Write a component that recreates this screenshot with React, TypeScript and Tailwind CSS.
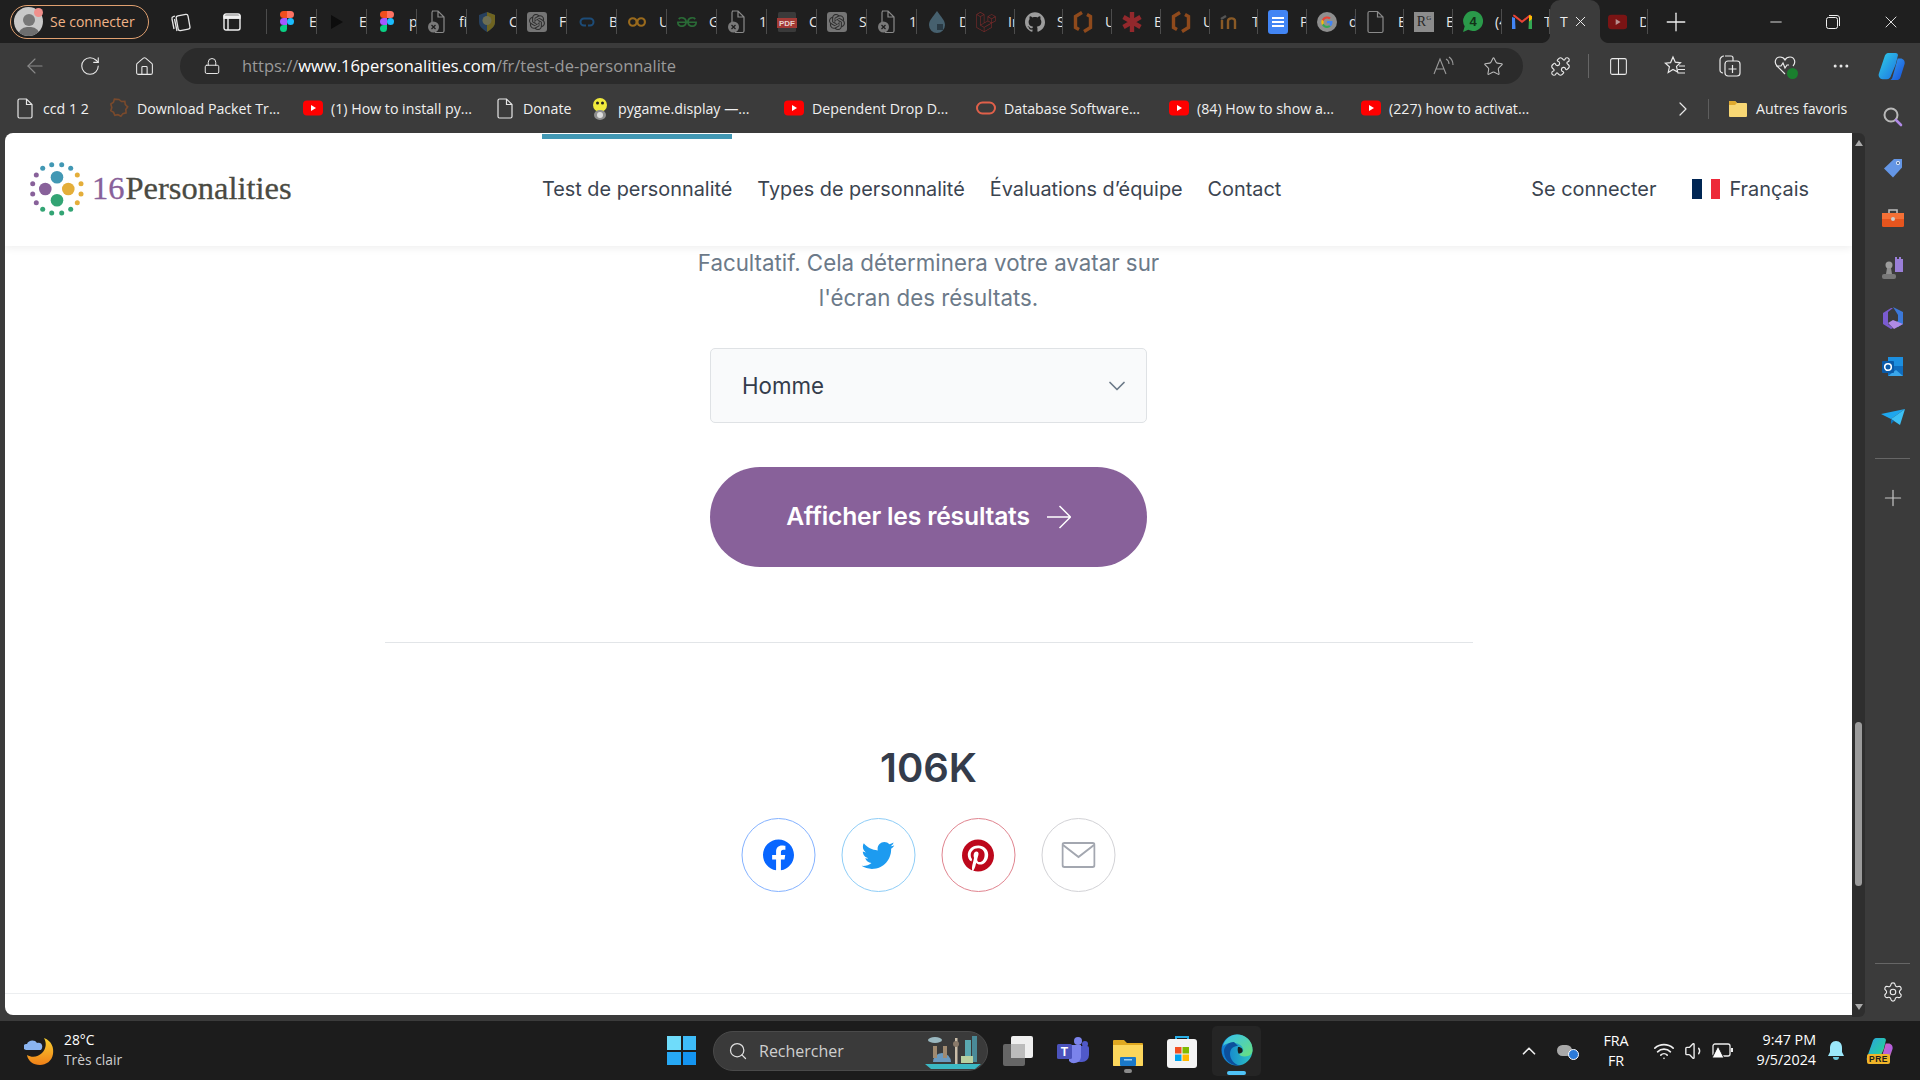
import React from "react";
import { ArrowLeft, RotateCw, Home, Lock, Star, Puzzle, Columns2, Minus, X, Plus, ChevronRight, ChevronUp, ChevronDown, Search, Settings, Wifi, Volume1, Ellipsis } from "lucide-react";
import { SiOpenai, SiGeeksforgeeks, SiLaravel, SiGithub } from "react-icons/si";
import { FaFacebook, FaTwitter, FaPinterest } from "react-icons/fa";

const Figma = () => (
  <svg width="14" height="21" viewBox="0 0 38 57">
    <path d="M19 0H9.5a9.5 9.5 0 0 0 0 19H19z" fill="#f24e1e" />
    <path d="M19 0h9.5a9.5 9.5 0 0 1 0 19H19z" fill="#ff7262" />
    <path d="M19 19H9.5a9.5 9.5 0 0 0 0 19H19z" fill="#a259ff" />
    <circle cx="28.5" cy="28.5" r="9.5" fill="#1abcfe" />
    <path d="M9.5 38H19v9.5a9.5 9.5 0 1 1-9.5-9.5z" fill="#0acf83" />
  </svg>
);
const FileX = () => (
  <svg width="20" height="25" viewBox="0 0 20 25" fill="none">
    <path d="M5 2h6l6 6v14a1.5 1.5 0 0 1-1.5 1.5H8M5 14V3.5A1.5 1.5 0 0 1 6.5 2M11 2v6h6" stroke="#8a8a8a" strokeWidth="1.2" />
    <circle cx="6.5" cy="18" r="5.5" fill="#7a7a7a" />
    <path d="M4.5 16l4 4M8.5 16l-4 4" stroke="#1f1f1f" strokeWidth="1.3" />
  </svg>
);
const Openai = () => (
  <div className="w-[20px] h-[20px] rounded-[3px] bg-[#757575] flex items-center justify-center">
    <SiOpenai size={16} color="#2e2e2e" />
  </div>
);
const Brackets = () => (
  <svg width="20" height="24" viewBox="0 0 20 24" fill="none" stroke="#8f4a1c" strokeWidth="3.4">
    <path d="M9 2.500L2.500 6.500v11L6 19.500" />
    <path d="M11 21.500l6.500-4v-11L14 4.500" />
  </svg>
);
const Tabs = [
  { w: "w-[50px]", icon: <Figma />, label: "Exercices" },
  { w: "w-[50px]", icon: <svg width="16" height="18" viewBox="0 0 16 18"><path d="M2 2l12 7-12 7z" fill="#0d0d0d" /></svg>, label: "Exemple" },
  { w: "w-[50px]", icon: <Figma />, label: "projet" },
  { w: "w-[50px]", icon: <FileX />, label: "fichier" },
  { w: "w-[50px]", icon: <svg width="18" height="22" viewBox="0 0 18 22"><path d="M9 1l8 3v7c0 5-4 7-8 10-4-3-8-5-8-10V4z" fill="#27405e" /><path d="M9 1l8 3v7c0 5-4 7-8 10z" fill="#6f6420" /><circle cx="9" cy="9.500" r="4.500" fill="#6e6e52" /></svg>, label: "Cours" },
  { w: "w-[50px]", icon: <Openai />, label: "Fonction" },
  { w: "w-[50px]", icon: <svg width="18" height="12" viewBox="0 0 18 12" fill="none"><path d="M6 2.500h6a3.500 3.500 0 0 1 0 7h-2M8 9.500H6a3.500 3.500 0 0 1 0-7" stroke="#1d4c78" strokeWidth="2" /></svg>, label: "Base" },
  { w: "w-[50px]", icon: <svg width="24" height="14" viewBox="0 0 24 14" fill="none" stroke="#9a6a1c" strokeWidth="2.6"><circle cx="7" cy="7" r="4.5" /><circle cx="17" cy="7" r="4.5" /></svg>, label: "Udemy" },
  { w: "w-[50px]", icon: <SiGeeksforgeeks size={20} color="#2a6a36" />, label: "Geeks" },
  { w: "w-[50px]", icon: <FileX />, label: "1" },
  { w: "w-[50px]", icon: <svg width="20" height="24" viewBox="0 0 20 24"><rect x="1" y="2" width="18" height="20" rx="1.5" fill="#3a3a3a" /><rect x="0" y="8" width="20" height="10" fill="#a33a36" /><text x="10" y="16" fontSize="8" fontWeight="700" textAnchor="middle" fill="#e6d2d0" fontFamily="Liberation Sans, sans-serif">PDF</text></svg>, label: "Cours" },
  { w: "w-[50px]", icon: <Openai />, label: "Sujet" },
  { w: "w-[50px]", icon: <FileX />, label: "1" },
  { w: "w-[49px]", icon: <svg width="18" height="24" viewBox="0 0 18 24"><path d="M9 1c4 6 8 9 8 14a8 8 0 0 1-16 0C1 10 5 7 9 1z" fill="#46606e" /><rect x="9" y="14" width="6" height="6" fill="#2a3a44" /></svg>, label: "Docs" },
  { w: "w-[49px]", icon: <SiLaravel size={20} color="#7a2a2a" />, label: "Installation" },
  { w: "w-[48px]", icon: <SiGithub size={20} color="#9c9c9c" />, label: "Sujet" },
  { w: "w-[49px]", icon: <Brackets />, label: "Udemy" },
  { w: "w-[49px]", icon: <svg width="20" height="20" viewBox="0 0 20 20" stroke="#93282c" strokeWidth="4.4"><path d="M10 0v20M1.5 5l17 10M1.5 15l17-10" /></svg>, label: "Blog" },
  { w: "w-[49px]", icon: <Brackets />, label: "Udemy" },
  { w: "w-[48px]", icon: <svg width="20" height="14" viewBox="0 0 20 14" fill="none" stroke="#8a5a26" strokeWidth="2.4"><path d="M2 14V5M8 14V6c0-3 7-4 7 0v8" /><path d="M1 4l5-3" stroke="#555" /></svg>, label: "Tuto" },
  { w: "w-[49px]", icon: <div className="w-[20px] h-[24px] rounded-[3px] bg-[#4285f4] flex flex-col items-center justify-center gap-[2px]"><div className="w-[12px] h-[2px] bg-white" /><div className="w-[12px] h-[2px] bg-white" /><div className="w-[12px] h-[2px] bg-white" /></div>, label: "Projet" },
  { w: "w-[49px]", icon: <svg width="20" height="20" viewBox="0 0 20 20"><circle cx="10" cy="10" r="10" fill="#8f8f8f" /><path d="M15.5 10.2c0-.4 0-.8-.1-1.2H10v2.2h3.1a2.700 2.700 0 0 1-1.100 1.700l1.800 1.400c1-1 1.700-2.400 1.700-4.100z" fill="#4285f4" /><path d="M10 16c1.500 0 2.800-.5 3.800-1.400L12 13.200c-.5.300-1.200.6-2 .6-1.500 0-2.800-1-3.300-2.400L4.900 12.800C5.800 14.700 7.700 16 10 16z" fill="#34a853" /><path d="M6.700 11.400a3.700 3.700 0 0 1 0-2.400L4.900 7.500a6 6 0 0 0 0 5.400z" fill="#fbbc05" /><path d="M10 6.400c.8 0 1.600.3 2.200.9l1.600-1.600A6 6 0 0 0 4.900 7.500L6.700 9c.5-1.500 1.800-2.600 3.300-2.600z" fill="#ea4335" /></svg>, label: "doc" },
  { w: "w-[48px]", icon: <svg width="18" height="24" viewBox="0 0 18 24" fill="none" stroke="#8a8a8a" strokeWidth="1.2"><path d="M2.500 1.500h8l5.500 5.500v14a1.500 1.500 0 0 1-1.500 1.500h-12a1.500 1.500 0 0 1-1.500-1.500V3a1.500 1.500 0 0 1 1.500-1.500zM10.500 1.500V7H16" /></svg>, label: "Examen" },
  { w: "w-[49px]", icon: <div className="w-[20px] h-[20px] bg-[#8c8c8c] flex items-center justify-center text-[#262626] text-[14px] leading-none font-['Liberation_Serif',serif]">R<sup className="text-[7px]">G</sup></div>, label: "Etude" },
  { w: "w-[49px]", icon: <div className="relative w-[20px] h-[21px] flex items-center justify-center"><svg width="20" height="21" viewBox="0 0 20 21"><path d="M10 0a10 10 0 1 1-4.700 18.800L0 21l1.700-5.700A10 10 0 0 1 10 0z" fill="#2a9a4a" /></svg><span className="absolute inset-0 flex items-center justify-center text-[13px] font-bold text-[#123018] font-['Liberation_Sans',sans-serif]">4</span></div>, label: "(4) WhatsApp" },
  { w: "w-[48px]", icon: <svg width="20" height="16" viewBox="0 0 20 16"><path d="M0 15V3l3 1 .5 11z" fill="#4285f4" /><path d="M20 15V3l-3 1-.5 11z" fill="#34a853" /><path d="M1 2l9 7 9-7-.5-1.500L17 1l-7 5.500L3 1 1.500.5z" fill="#ea4335" /><path d="M17 1l3 1v3l-3 2.500z" fill="#fbbc05" /></svg>, label: "Test" },
];

const Tab = ({ t }: { t: (typeof Tabs)[number] }) => (
  <div className={`${t.w} h-full flex items-center pl-[10px] relative`}>
    <div className="w-[20px] flex items-center justify-center shrink-0">{t.icon}</div>
    <div className="ml-[12px] flex-1 overflow-hidden whitespace-nowrap text-[14px] text-[#e8e8e8]">{t.label}</div>
    <div className="w-[1px] h-[25px] bg-[#4c4c4c] shrink-0" />
  </div>
);

const Yt = () => (
  <svg width="20" height="16" viewBox="0 0 20 16"><rect y="0.500" width="20" height="15" rx="4" fill="#f00" /><path d="M8 5l5 3-5 3z" fill="#fff" /></svg>
);
const Doc = () => (
  <svg width="16" height="21" viewBox="0 0 16 21" fill="none" stroke="#e6e6e6" strokeWidth="1.2"><path d="M2.500 1h7L15 6.500v12a1.500 1.500 0 0 1-1.500 1.500h-11A1.500 1.500 0 0 1 1 18.500V2.500A1.500 1.500 0 0 1 2.500 1zM9.500 1v5.500H15" /></svg>
);
const Bookmarks = [
  { w: "w-[94px]", icon: <Doc />, label: "ccd 1 2" },
  { w: "w-[194px]", icon: <svg width="20" height="20" viewBox="0 0 20 20" fill="none" stroke="#7a4a2c" strokeWidth="1.600"><path d="M10 1.500l2.500 2 3.300-.2.500 3.200 2.400 2.300-1.900 2.700.3 3.300-3.200.8-2 2.600-2.900-1.500-3.200.7-1.200-3-2.800-1.700 1-3.100L1.800 6l2.700-1.800.9-3.100z" /></svg>, label: "Download Packet Tr..." },
  { w: "w-[192px]", icon: <Yt />, label: "(1) How to install py..." },
  { w: "w-[95px]", icon: <Doc />, label: "Donate" },
  { w: "w-[194px]", icon: <svg width="20" height="24" viewBox="0 0 20 24"><ellipse cx="10" cy="8" rx="7" ry="7" fill="#f0ea3c" /><circle cx="7.500" cy="6" r="1.500" fill="#222" /><circle cx="12.500" cy="6" r="1.500" fill="#222" /><ellipse cx="10" cy="18" rx="6" ry="5" fill="#8f8f8f" /><ellipse cx="10" cy="18" rx="3" ry="3" fill="#ddd" /></svg>, label: "pygame.display —..." },
  { w: "w-[192px]", icon: <Yt />, label: "Dependent Drop D..." },
  { w: "w-[193px]", icon: <svg width="20" height="14" viewBox="0 0 20 14" fill="none"><rect x="1" y="1.500" width="18" height="11" rx="5.500" stroke="#e0604a" strokeWidth="2" /></svg>, label: "Database Software..." },
  { w: "w-[192px]", icon: <Yt />, label: "(84) How to show a..." },
  { w: "w-[300px]", icon: <Yt />, label: "(227) how to activat..." },
];

const Bookmark = ({ b }: { b: (typeof Bookmarks)[number] }) => (
  <div className={`${b.w} flex items-center shrink-0`}>
    <div className="w-[20px] flex items-center justify-center shrink-0">{b.icon}</div>
    <span className="ml-[8px] whitespace-nowrap text-[14.200px] text-[#f0f0f0]">{b.label}</span>
  </div>
);

const Copilot = ({ size = 34 }: { size?: number }) => (
  <svg width={size} height={size} viewBox="0 0 32 32">
    <defs>
      <linearGradient id="cp1" x1="0" y1="0" x2="1" y2="1"><stop offset="0" stopColor="#2fd0e8" /><stop offset="1" stopColor="#1d6fe0" /></linearGradient>
      <linearGradient id="cp2" x1="0" y1="0" x2="1" y2="1"><stop offset="0" stopColor="#3aa0f0" /><stop offset="1" stopColor="#1350d8" /></linearGradient>
    </defs>
    <path d="M12 2h8c1.500 0 2 1 2.400 2.200L20 14l-5 12c-.5 2-2 4-4.500 4H6C3 30 1 27 2 24L8 6c.5-2 2-4 4-4z" fill="url(#cp1)" />
    <path d="M22 8h3c3 0 5 2.500 4.500 5.500L25 28c-.5 2-2 3-4 3h-8c2 0 3-1 3.500-3L21 12z" fill="url(#cp2)" />
  </svg>
);
const CopilotPre = () => (
  <svg width="30" height="28" viewBox="0 0 32 30">
    <defs>
      <linearGradient id="cq1" x1="0" y1="0" x2="1" y2="1"><stop offset="0" stopColor="#2b9fe8" /><stop offset="0.600" stopColor="#27c7a8" /><stop offset="1" stopColor="#d8d030" /></linearGradient>
      <linearGradient id="cq2" x1="0" y1="0" x2="1" y2="1"><stop offset="0" stopColor="#e860b0" /><stop offset="0.600" stopColor="#b060e0" /><stop offset="1" stopColor="#f09040" /></linearGradient>
    </defs>
    <path d="M12 1h8c1.500 0 2 1 2.400 2.200L20 13l-5 11c-.5 2-2 4-4.500 4H6c-3 0-5-3-4-6L8 5c.5-2 2-4 4-4z" fill="url(#cq1)" />
    <path d="M22 7h3c3 0 5 2.500 4.500 5.500L25 26c-.5 2-2 3-4 3h-8c2 0 3-1 3.500-3L21 11z" fill="url(#cq2)" />
  </svg>
);

const Sidebar = () => (
  <div className="w-[55px] flex flex-col items-center shrink-0">
    <svg className="mt-[25px]" width="20" height="20" viewBox="0 0 20 20"><path d="M1 10.500L11 1h8v8.500L10 19.500z" fill="#6496e6" /><circle cx="15" cy="5" r="2" fill="#e8eef8" /><circle cx="15" cy="5" r="1" fill="#34507c" /></svg>
    <svg className="mt-[29px]" width="24" height="22" viewBox="0 0 24 22"><path d="M8 6V3h8v3" stroke="#bdbdbd" fill="none" strokeWidth="1.600" /><rect x="1" y="6" width="22" height="14" rx="1.500" fill="#e6551e" /><rect x="1" y="6" width="22" height="6" fill="#f47036" /><circle cx="12" cy="12" r="2" fill="#ccc" /></svg>
    <svg className="mt-[27px]" width="24" height="24" viewBox="0 0 24 24"><path d="M14 1h2v2h2V1h2v2h2V1v15h-8z" fill="#9a7fd8" /><circle cx="8" cy="9" r="3.500" fill="#9c9c9c" /><path d="M6 12h4l1 6H5z" fill="#8f8f8f" /><rect x="1" y="18" width="14" height="5" rx="2" fill="#777" /></svg>
    <svg className="mt-[26px]" width="22" height="24" viewBox="0 0 22 24"><path d="M11 1l10 5v12l-5 3-5-3 5-3V9z" fill="#3b78d8" /><path d="M1 7l8-5 2 0-5 4v12l5 4-2 1-8-5z" fill="#7a5bd0" /><path d="M6 17l5-3 10 4-9 5z" fill="#b08ae6" /></svg>
    <svg className="mt-[26px]" width="22" height="22" viewBox="0 0 22 22"><rect x="6" y="1" width="15" height="9" fill="#1c8fe0" /><rect x="6" y="10" width="15" height="10" fill="#0f6cbd" /><path d="M6 20h15l-7-6z" fill="#3aa6ea" /><rect x="0" y="5" width="12" height="12" rx="1" fill="#0a5aa8" /><circle cx="6" cy="11" r="3.300" fill="none" stroke="#fff" strokeWidth="1.600" /></svg>
    <svg className="mt-[31px]" width="24" height="16" viewBox="0 0 24 16"><path d="M0 5l24-5-14 10z" fill="#1ea7ee" /><path d="M24 0l-5 16-9-6z" fill="#3cc0f5" /><path d="M10 10v5l3-3z" fill="#0c6fb8" /></svg>
    <div className="mt-[33px] w-[35px] h-[1px] bg-[#666]" />
    <Plus className="mt-[26px]" size={26} strokeWidth={1.100} color="#c8c8c8" />
    <div className="mt-auto w-[35px] h-[1px] bg-[#666]" />
    <Settings className="mt-[17px] mb-[18px]" size={22} strokeWidth={1.250} color="#ededed" />
  </div>
);

const Scrollbar = () => (
  <div className="w-[13px] h-[884px] shrink-0 bg-[#2e2e2e] rounded-r-[6px] flex flex-col items-center">
    <svg className="mt-[7px]" width="8" height="6" viewBox="0 0 8 6"><path d="M4 0l4 6H0z" fill="#aaa" /></svg>
    <div className="w-[7px] h-[164px] mt-[576px] bg-[#9b9b9b] rounded-full" />
    <svg className="mt-[118px]" width="8" height="6" viewBox="0 0 8 6"><path d="M0 0h8L4 6z" fill="#aaa" /></svg>
  </div>
);

const Logo = () => (
  <svg width="60" height="60" viewBox="0 0 60 60">
    <circle cx="32" cy="17.300" r="6.300" fill="#4298b4" />
    <circle cx="20.300" cy="29" r="6.300" fill="#88619a" />
    <circle cx="43.300" cy="29" r="6.300" fill="#e4ae3a" />
    <circle cx="32" cy="40.300" r="6.300" fill="#33a474" />
    {[[26.700, 4.700], [36.700, 4.700], [17.700, 8.300], [45.700, 8.300]].map(([x, y], i) => <circle key={i} cx={x} cy={y} r="2.500" fill="#4298b4" />)}
    {[[52.300, 15], [56, 23.700], [56, 34], [52.300, 42.700]].map(([x, y], i) => <circle key={i} cx={x} cy={y} r="2.500" fill="#e4ae3a" />)}
    {[[45.700, 49.300], [36.700, 53], [26.700, 53], [17.700, 49.300]].map(([x, y], i) => <circle key={i} cx={x} cy={y} r="2.500" fill="#33a474" />)}
    {[[11.300, 42.700], [7.700, 34], [7.700, 23.700], [11.300, 15]].map(([x, y], i) => <circle key={i} cx={x} cy={y} r="2.500" fill="#88619a" />)}
  </svg>
);

export default function App() {
  return (
    <div className="w-[1920px] h-[1080px] overflow-hidden flex flex-col bg-[#3b3b3b] font-['Open_Sans',sans-serif]">
      {/* Tab strip */}
      <div className="h-[43px] bg-[#1f1f1f] flex items-center shrink-0">
        <div className="w-[139px] h-[34px] ml-[10px] rounded-full border border-[#e0a070] flex items-center pl-[3px] relative shrink-0">
          <div className="w-[29px] h-[29px] rounded-full bg-[#c9c9c9] flex flex-col items-center justify-end overflow-hidden">
            <div className="w-[12px] h-[12px] rounded-full bg-[#777] mb-[1px]" />
            <div className="w-[22px] h-[9px] rounded-t-full bg-[#6e6e6e]" />
          </div>
          <div className="absolute left-[23px] top-[2px] w-[9px] h-[9px] rounded-full bg-[#f0908c]" />
          <span className="ml-[7px] text-[14px] text-[#f0b488] whitespace-nowrap">Se connecter</span>
        </div>
        <div className="w-[62px] flex items-center justify-center shrink-0">
          <svg width="22" height="22" viewBox="0 0 22 22" fill="none" stroke="#e6e6e6" strokeWidth="1.300"><rect x="8" y="4" width="12" height="15" rx="2" transform="rotate(-10 14 11)" /><path d="M5 18L3 8c-.2-1 .3-2 1.300-2.300L6 5M8 20L5.500 8" /></svg>
        </div>
        <div className="w-[42px] flex items-center justify-center shrink-0">
          <svg width="18" height="18" viewBox="0 0 18 18" fill="none" stroke="#f0f0f0" strokeWidth="1.400"><rect x="1" y="1" width="16" height="16" rx="2" /><path d="M1 5h16M5 5v12" /><path d="M1 3h16v2H1z" fill="#f0f0f0" /></svg>
        </div>
        <div className="w-[1px] h-[25px] bg-[#4c4c4c] ml-[13px] shrink-0" />
        {Tabs.map((t, i) => <Tab key={i} t={t} />)}
        <div className="w-[50px] h-full bg-[#3b3b3b] rounded-t-[10px] flex items-center pl-[10px] relative shrink-0">
          <span className="text-[14px] text-[#eee] w-[12px]">T</span>
          <X size={17} strokeWidth={1.400} color="#eee" />
          <svg className="absolute left-[-8px] bottom-0" width="8" height="8" viewBox="0 0 8 8"><path d="M8 0v8H0c4 0 8-4 8-8z" fill="#3b3b3b" /></svg>
          <svg className="absolute right-[-8px] bottom-0" width="8" height="8" viewBox="0 0 8 8"><path d="M0 0v8h8C4 8 0 4 0 0z" fill="#3b3b3b" /></svg>
        </div>
        <div className="w-[48px] h-full flex items-center pl-[8px] shrink-0">
          <svg width="20" height="16" viewBox="0 0 20 16"><rect y="0.500" width="20" height="15" rx="3.500" fill="#7a1414" /><path d="M8 5l5 3-5 3z" fill="#b8908f" /></svg>
          <span className="ml-[12px] w-[7px] overflow-hidden text-[14px] text-[#e8e8e8]">Docs</span>
          <div className="ml-[1px] w-[1px] h-[25px] bg-[#4c4c4c]" />
        </div>
        <div className="w-[56px] flex items-center justify-center shrink-0">
          <Plus size={30} strokeWidth={1.050} color="#eee" />
        </div>
        <div className="flex-1" />
        <div className="w-[57px] flex justify-center shrink-0"><Minus size={18} strokeWidth={1.200} color="#eee" /></div>
        <div className="w-[58px] flex justify-center shrink-0">
          <svg width="14" height="14" viewBox="0 0 14 14" fill="none" stroke="#eee" strokeWidth="1"><rect x="0.500" y="2.500" width="11" height="11" rx="2" /><path d="M3 .5h8a2.500 2.500 0 0 1 2.500 2.500v8" /></svg>
        </div>
        <div className="w-[58px] flex justify-center shrink-0"><X size={20} strokeWidth={1.100} color="#eee" /></div>
      </div>

      {/* Toolbar */}
      <div className="h-[36px] mt-[5px] flex items-center pl-[7px] shrink-0">
        <div className="w-[55px] flex justify-center"><ArrowLeft size={24} strokeWidth={1.100} color="#8a8a8a" /></div>
        <div className="w-[55px] flex justify-center"><RotateCw size={22} strokeWidth={1.200} color="#eaeaea" /></div>
        <div className="w-[55px] flex justify-center"><Home size={21} strokeWidth={1.200} color="#eaeaea" /></div>
        <div className="w-[1343px] h-[36px] ml-[8px] rounded-full bg-[#2b2b2b] flex items-center pl-[23px] pr-[19px] shrink-0">
          <Lock size={18} strokeWidth={1.300} color="#eaeaea" />
          <span className="ml-[21px] text-[16.500px] whitespace-nowrap text-[#9a9a9a]">https://<span className="text-white">www.16personalities.com</span>/fr/test-de-personnalite</span>
          <div className="flex-1" />
          <svg width="22" height="20" viewBox="0 0 22 20" fill="none" stroke="#9a9a9a" strokeWidth="1.100"><path d="M2 18L8 3l6 15M4 13h8M14 3c2 1 3 3 3 5M17 1c3 2 4 5 4 8" /></svg>
          <Star className="ml-[29px]" size={21} strokeWidth={1.200} color="#bbb" />
        </div>
        <div className="w-[55px] ml-[10px] flex justify-center"><Puzzle size={21} strokeWidth={1.300} color="#eaeaea" /></div>
        <div className="w-[1px] h-[24px] bg-[#666]" />
        <div className="w-[58px] flex justify-center"><Columns2 size={21} strokeWidth={1.200} color="#eaeaea" /></div>
        <div className="w-[56px] flex justify-center">
          <svg width="22" height="22" viewBox="0 0 22 22" fill="none" stroke="#eaeaea" strokeWidth="1.200"><path d="M9 2l2.300 5.200 5.200.6-4 3.600 1.200 5.600L9 14.500l-4.800 2.900 1.200-5.600-4-3.600 5.200-.6zM15 11h6M14 14.500h7M13.500 18h7.500" /></svg>
        </div>
        <div className="w-[54px] flex justify-center">
          <svg width="22" height="24" viewBox="0 0 22 24" fill="none" stroke="#eaeaea" strokeWidth="1.200"><path d="M6 2h6a2 2 0 0 1 2 2v3M4 19a3 3 0 0 1-3-3V6c0-2 2-4 4-4" /><rect x="6" y="7" width="15" height="15" rx="3" /><path d="M13.500 11v8M9.500 15h8" /></svg>
        </div>
        <div className="w-[56px] flex justify-center relative">
          <svg width="22" height="22" viewBox="0 0 22 22" fill="none" stroke="#eaeaea" strokeWidth="1.200"><path d="M11 19l-8-8C0 8 1 2 6 2c2 0 4 1 5 3 1-2 3-3 5-3 5 0 6 6 3 9M2 11h5l2-3 2 5 2-3h2" /></svg>
          <div className="absolute left-[30px] top-[13px] w-[11px] h-[11px] rounded-full bg-[#1a7f2e]" />
        </div>
        <div className="w-[56px] flex justify-center"><Ellipsis size={20} strokeWidth={1.600} color="#eaeaea" /></div>
        <div className="ml-[8px] flex justify-center"><Copilot size={30} /></div>
      </div>

      {/* Bookmarks */}
      <div className="h-[49px] flex items-center pl-[15px] shrink-0">
        {Bookmarks.map((b, i) => <Bookmark key={i} b={b} />)}
        <div className="w-[44px] flex justify-center shrink-0"><ChevronRight size={24} strokeWidth={1.200} color="#e8e8e8" /></div>
        <div className="w-[1px] h-[20px] ml-[3px] bg-[#5e5e5e] shrink-0" />
        <svg className="ml-[19px] shrink-0" width="20" height="18" viewBox="0 0 20 18"><path d="M1 2a1 1 0 0 1 1-1h5l2 2h9a1 1 0 0 1 1 1v12a1 1 0 0 1-1 1H2a1 1 0 0 1-1-1z" fill="#f8d774" /><path d="M1 2a1 1 0 0 1 1-1h5l2 2-2 2H1z" fill="#e0a92e" /></svg>
        <span className="ml-[8px] text-[14.200px] text-[#f0f0f0] whitespace-nowrap">Autres favoris</span>
        <div className="flex-1" />
        <div className="w-[55px] flex justify-center shrink-0 mt-[16px]">
          <svg width="21" height="21" viewBox="0 0 21 21" fill="none"><circle cx="9" cy="9" r="6.500" stroke="#b9b9b9" strokeWidth="2" /><path d="M14 14l5 5" stroke="#b08ae6" strokeWidth="2.600" strokeLinecap="round" /></svg>
        </div>
      </div>

      {/* Middle */}
      <div className="h-[888px] flex pl-[5px] shrink-0">
        <div className="w-[1847px] h-[882px] bg-white rounded-l-[8px] overflow-hidden flex flex-col shrink-0 font-['Inter',sans-serif]">
          <header className="h-[113px] flex items-center shrink-0 shadow-[0_2px_8px_rgba(0,0,0,0.07)] relative">
            <div className="w-[537px] flex items-center pl-[20px] shrink-0">
              <Logo />
              <div className="ml-[7px] -mt-[3px] flex items-baseline font-['Liberation_Serif',serif] text-[32.500px] [-webkit-text-stroke:0.3px_currentColor] leading-none">
                <span className="text-[#88619a]">16</span>
                <span className="ml-[1px] text-[#4a4a42]">Personalities</span>
              </div>
            </div>
            <nav className="flex items-center gap-[25px] text-[19.850px] text-[#3b4450] relative">
              <div className="absolute left-0 w-[190px] -top-[41px] h-[5px] bg-[#4298b4]" />
              <span>Test de personnalité</span>
              <span>Types de personnalité</span>
              <span>Évaluations d’équipe</span>
              <span>Contact</span>
            </nav>
            <div className="flex-1" />
            <div className="flex items-center pr-[43px] text-[19.900px] text-[#3b4450]">
              <span>Se connecter</span>
              <div className="ml-[36px] w-[28px] h-[20px] flex">
                <div className="flex-1 bg-[#002654]" /><div className="flex-1 bg-white" /><div className="flex-1 bg-[#ed2939]" />
              </div>
              <span className="ml-[9px]">Français</span>
            </div>
          </header>
          <main className="flex-1 flex flex-col items-center">
            <p className="w-[500px] text-center text-[22.300px] leading-[35px] text-[#6c7a89] -mt-[1px]">Facultatif. Cela déterminera votre avatar sur l'écran des résultats.</p>
            <div className="w-[437px] h-[75px] mt-[33px] rounded-[5px] border border-[#dfe2e5] bg-[#f9fafb] flex items-center pl-[31px] pr-[15px] justify-between">
              <span className="text-[22.300px] text-[#343c4b]">Homme</span>
              <ChevronDown size={28} strokeWidth={1.500} color="#6c7a89" />
            </div>
            <div className="w-[437px] h-[100px] mt-[44px] rounded-full bg-[#88619a] flex items-center justify-center gap-[17px]">
              <span className="text-[24.700px] font-semibold text-white tracking-[-0.2px]">Afficher les résultats</span>
              <svg width="24" height="24" viewBox="0 0 24 24" fill="none" stroke="#fff" strokeWidth="1.500"><path d="M0 12h23M12.500 1L23.500 12 12.500 23" /></svg>
            </div>
            <div className="w-[1088px] h-[1px] mt-[75px] bg-[#e2e5e8]" />
            <div className="mt-[100px] text-[40px] leading-[50px] font-semibold text-[#343c4b]">106K</div>
            <div className="mt-[25px] flex gap-[26px] -translate-x-[0.5px]">
              <div className="w-[74px] h-[74px] rounded-full border border-[#84b2ff] flex items-center justify-center"><FaFacebook size={32} color="#0866ff" /></div>
              <div className="w-[74px] h-[74px] rounded-full border border-[#8ecdf7] flex items-center justify-center"><FaTwitter size={33} color="#1d9bf0" /></div>
              <div className="w-[74px] h-[74px] rounded-full border border-[#e0848f] flex items-center justify-center"><FaPinterest size={33} color="#bd081c" /></div>
              <div className="w-[74px] h-[74px] rounded-full border border-[#d2d2d6] flex items-center justify-center">
                <svg width="34" height="26" viewBox="0 0 34 26" fill="none" stroke="#a3a7b0" strokeWidth="2"><rect x="1" y="1" width="32" height="24" rx="2" /><path d="M1.500 3L17 15 32.500 3" /></svg>
              </div>
            </div>
            <div className="w-full h-[1px] mt-[101px] bg-[#eceef0]" />
          </main>
        </div>
        <Scrollbar />
        <Sidebar />
      </div>

      {/* Taskbar */}
      <div className="flex-1 bg-[#1c1c1c] flex items-center text-white">
        <div className="w-[667px] flex items-center pl-[24px] shrink-0">
          <svg width="30" height="32" viewBox="0 0 30 32"><defs><linearGradient id="mn" x1="0" y1="0" x2="0" y2="1"><stop offset="0" stopColor="#f8d030" /><stop offset="1" stopColor="#f08018" /></linearGradient></defs><path d="M20 3c8 3 10 10 9 16-1 7-7 11-13 11-7 0-12-4-13-10 5 3 11 2 15-2 4-4 5-10 2-15z" fill="url(#mn)" /><path d="M2 15a3 3 0 0 1 1-6c1-4 8-5 10-1 4-1 6 2 5 5-.3 1.500-1 2-2 2z" fill="#8ab4f0" /></svg>
          <div className="ml-[10px] flex flex-col text-[13.800px] leading-[20px] -mt-[2px]">
            <span>28°C</span>
            <span className="text-[#cfcfcf]">Très clair</span>
          </div>
        </div>
        <div className="w-[29px] h-[29px] grid grid-cols-2 gap-[2px] shrink-0">
          <div className="bg-[#6fdcfa]" /><div className="bg-[#3ebcf8]" /><div className="bg-[#27a9f5]" /><div className="bg-[#1494f0]" />
        </div>
        <div className="w-[275px] h-[40px] ml-[17px] rounded-full bg-[#3a3a3a] border border-[#4a4a4a] flex items-center pl-[14px] pr-[6px] shrink-0">
          <Search size={20} strokeWidth={1.500} color="#e0e0e0" />
          <span className="ml-[11px] text-[16px] text-[#cfcfcf]">Rechercher</span>
          <div className="flex-1" />
          <svg width="56" height="38" viewBox="0 0 56 38"><path d="M0 32h56l-6 5H6z" fill="#3bb8c4" /><rect x="30" y="6" width="2.500" height="26" fill="#c9bca8" /><circle cx="31" cy="12" r="3" fill="#8a7a6a" /><rect x="40" y="8" width="6" height="22" fill="#5aa8b0" /><rect x="47" y="4" width="5" height="26" fill="#4a8a98" /><path d="M8 30a9 9 0 0 1 18 0z" fill="#6a9ac0" /><rect x="8" y="14" width="4" height="12" fill="#a08a70" /><rect x="18" y="14" width="4" height="12" fill="#a08a70" /><rect x="36" y="24" width="12" height="7" fill="#b8d0a0" /><ellipse cx="10" cy="8" rx="7" ry="3" fill="#9ab8c0" /></svg>
        </div>
        <div className="w-[44px] flex justify-center ml-[8px] shrink-0">
          <div className="relative w-[30px] h-[30px]">
            <div className="absolute right-0 top-0 w-[22px] h-[22px] rounded-[2px] bg-[#efefef]" />
            <div className="absolute left-0 bottom-0 w-[22px] h-[22px] rounded-[2px] bg-[#666]" />
            <div className="absolute left-[8px] top-[8px] w-[14px] h-[14px] bg-[#bcbcbc]" />
          </div>
        </div>
        <div className="w-[55px] ml-[5px] flex justify-center shrink-0">
          <svg width="32" height="30" viewBox="0 0 32 30"><circle cx="21" cy="5" r="4" fill="#7b83eb" /><circle cx="28" cy="8" r="3" fill="#5059c9" /><path d="M12 10h18a2 2 0 0 1 2 2v7a7 7 0 0 1-7 7h-4a8 8 0 0 1-8-8z" fill="#5059c9" /><path d="M12 9h12v12a7 7 0 0 1-12 4z" fill="#7b83eb" /><rect x="0" y="8" width="15" height="15" rx="1.500" fill="#4b53bc" /><text x="7.500" y="20" fontSize="12" fontWeight="700" textAnchor="middle" fill="#fff" fontFamily="Liberation Sans, sans-serif">T</text></svg>
        </div>
        <div className="w-[55px] flex flex-col items-center shrink-0">
          <svg className="mt-[9px]" width="30" height="28" viewBox="0 0 30 28"><path d="M0 3a1 1 0 0 1 1-1h10l3 3h15a1 1 0 0 1 1 1v21a1 1 0 0 1-1 1H1a1 1 0 0 1-1-1z" fill="#e0a820" /><path d="M0 7h30v20a1 1 0 0 1-1 1H1a1 1 0 0 1-1-1z" fill="#fcd65c" /><rect x="7" y="19" width="16" height="9" rx="1" fill="#1a78c8" /><rect x="11" y="21" width="8" height="1.500" fill="#9ed0f5" /></svg>
          <div className="mt-[3px] w-[8px] h-[4px] rounded-full bg-[#8a8a8a]" />
        </div>
        <div className="w-[54px] flex justify-center shrink-0">
          <svg width="30" height="34" viewBox="0 0 30 34"><path d="M9 8V3h12v5" fill="none" stroke="#2ab0e8" strokeWidth="2" /><rect x="0" y="5" width="30" height="29" rx="3" fill="#f4f4f4" /><rect x="8" y="13" width="6.500" height="6.500" fill="#f25022" /><rect x="15.500" y="13" width="6.500" height="6.500" fill="#7fba00" /><rect x="8" y="20.500" width="6.500" height="6.500" fill="#00a4ef" /><rect x="15.500" y="20.500" width="6.500" height="6.500" fill="#ffb900" /></svg>
        </div>
        <div className="w-[49px] h-[50px] ml-[3px] rounded-[5px] bg-[#252525] flex flex-col items-center justify-end shrink-0">
          <svg width="32" height="33" viewBox="0 0 32 33"><defs><linearGradient id="eg" x1="0" y1="0" x2="1" y2="0"><stop offset="0" stopColor="#0f78d4" /><stop offset="1" stopColor="#2ec4c0" /></linearGradient><linearGradient id="eg2" x1="0" y1="0" x2="1" y2="1"><stop offset="0" stopColor="#35c1f1" /><stop offset="1" stopColor="#6be07a" /></linearGradient></defs><circle cx="16" cy="16" r="15.500" fill="url(#eg)" /><path d="M2 12C4 3 12 .5 16 .5c8 0 16 6 15.500 16 0 3-3 6-8 6-3 0-5-1-5.500-3 3 0 5-2 4-5-2-6-14-8-20-2.500z" fill="url(#eg2)" /><path d="M17 12c-4 0-8 2-8 8 0 5 4 10 10 12-8 0-16-5-16-15 0-4 4-9 10-9z" fill="#0c4f9c" /><path d="M17 13c4 0 5 2.500 4.500 4.500-.5 1.500-2.500 2-4 2-1-2-1-4.500-.5-6.500z" fill="#1c1c1c" /></svg>
          <div className="mt-[4px] mb-[1px] w-[19px] h-[4px] rounded-full bg-[#4fc3f7]" />
        </div>
        <div className="flex-1" />
        <div className="w-[48px] flex justify-center shrink-0"><ChevronUp size={22} strokeWidth={1.800} color="#eee" /></div>
        <div className="w-[30px] flex justify-center shrink-0">
          <div className="relative w-[22px] h-[18px]"><div className="absolute left-0 top-[3px] w-[15px] h-[11px] rounded-full bg-[#a8a8a8]" /><div className="absolute right-0 bottom-0 w-[11px] h-[11px] rounded-full bg-[#2b7ad8] border border-white" /></div>
        </div>
        <div className="w-[66px] flex flex-col items-center text-[14.300px] leading-[20px] shrink-0"><span>FRA</span><span>FR</span></div>
        <div className="w-[30px] flex justify-center shrink-0"><Wifi size={22} strokeWidth={1.800} color="#eee" /></div>
        <div className="w-[28px] pl-[4px] flex justify-center shrink-0"><Volume1 size={22} strokeWidth={1.500} color="#eee" /></div>
        <div className="w-[32px] flex justify-center shrink-0">
          <svg width="22" height="18" viewBox="0 0 22 18"><rect x="1" y="2" width="17" height="12" rx="2" fill="none" stroke="#eee" strokeWidth="1.300" /><rect x="19" y="6" width="2" height="4" fill="#eee" /><path d="M6 4l6 12H0z" fill="#fff" stroke="#1c1c1c" /></svg>
        </div>
        <div className="w-[77px] flex flex-col items-end text-[14.300px] leading-[20px] shrink-0 -mt-[1px]">
          <span>9:47 PM</span><span>9/5/2024</span>
        </div>
        <div className="w-[39px] flex justify-center shrink-0">
          <svg width="16" height="20" viewBox="0 0 16 20"><path d="M8 0c4 0 6 3 6 7v4l2 4H0l2-4V7c0-4 2-7 6-7z" fill="#9be8fb" /><path d="M5 16h6a3 3 0 0 1-6 0z" fill="#6ac6dc" /></svg>
        </div>
        <div className="w-[50px] flex justify-center relative shrink-0 mr-[15px]">
          <CopilotPre />
          <span className="absolute left-[12px] top-[17px] px-[2px] rounded-[2px] bg-[#f0b429] text-[#1c1c1c] text-[8.500px] leading-[10px] font-bold font-['Liberation_Sans',sans-serif] tracking-[0.5px]">PRE</span>
        </div>
      </div>
    </div>
  );
}
